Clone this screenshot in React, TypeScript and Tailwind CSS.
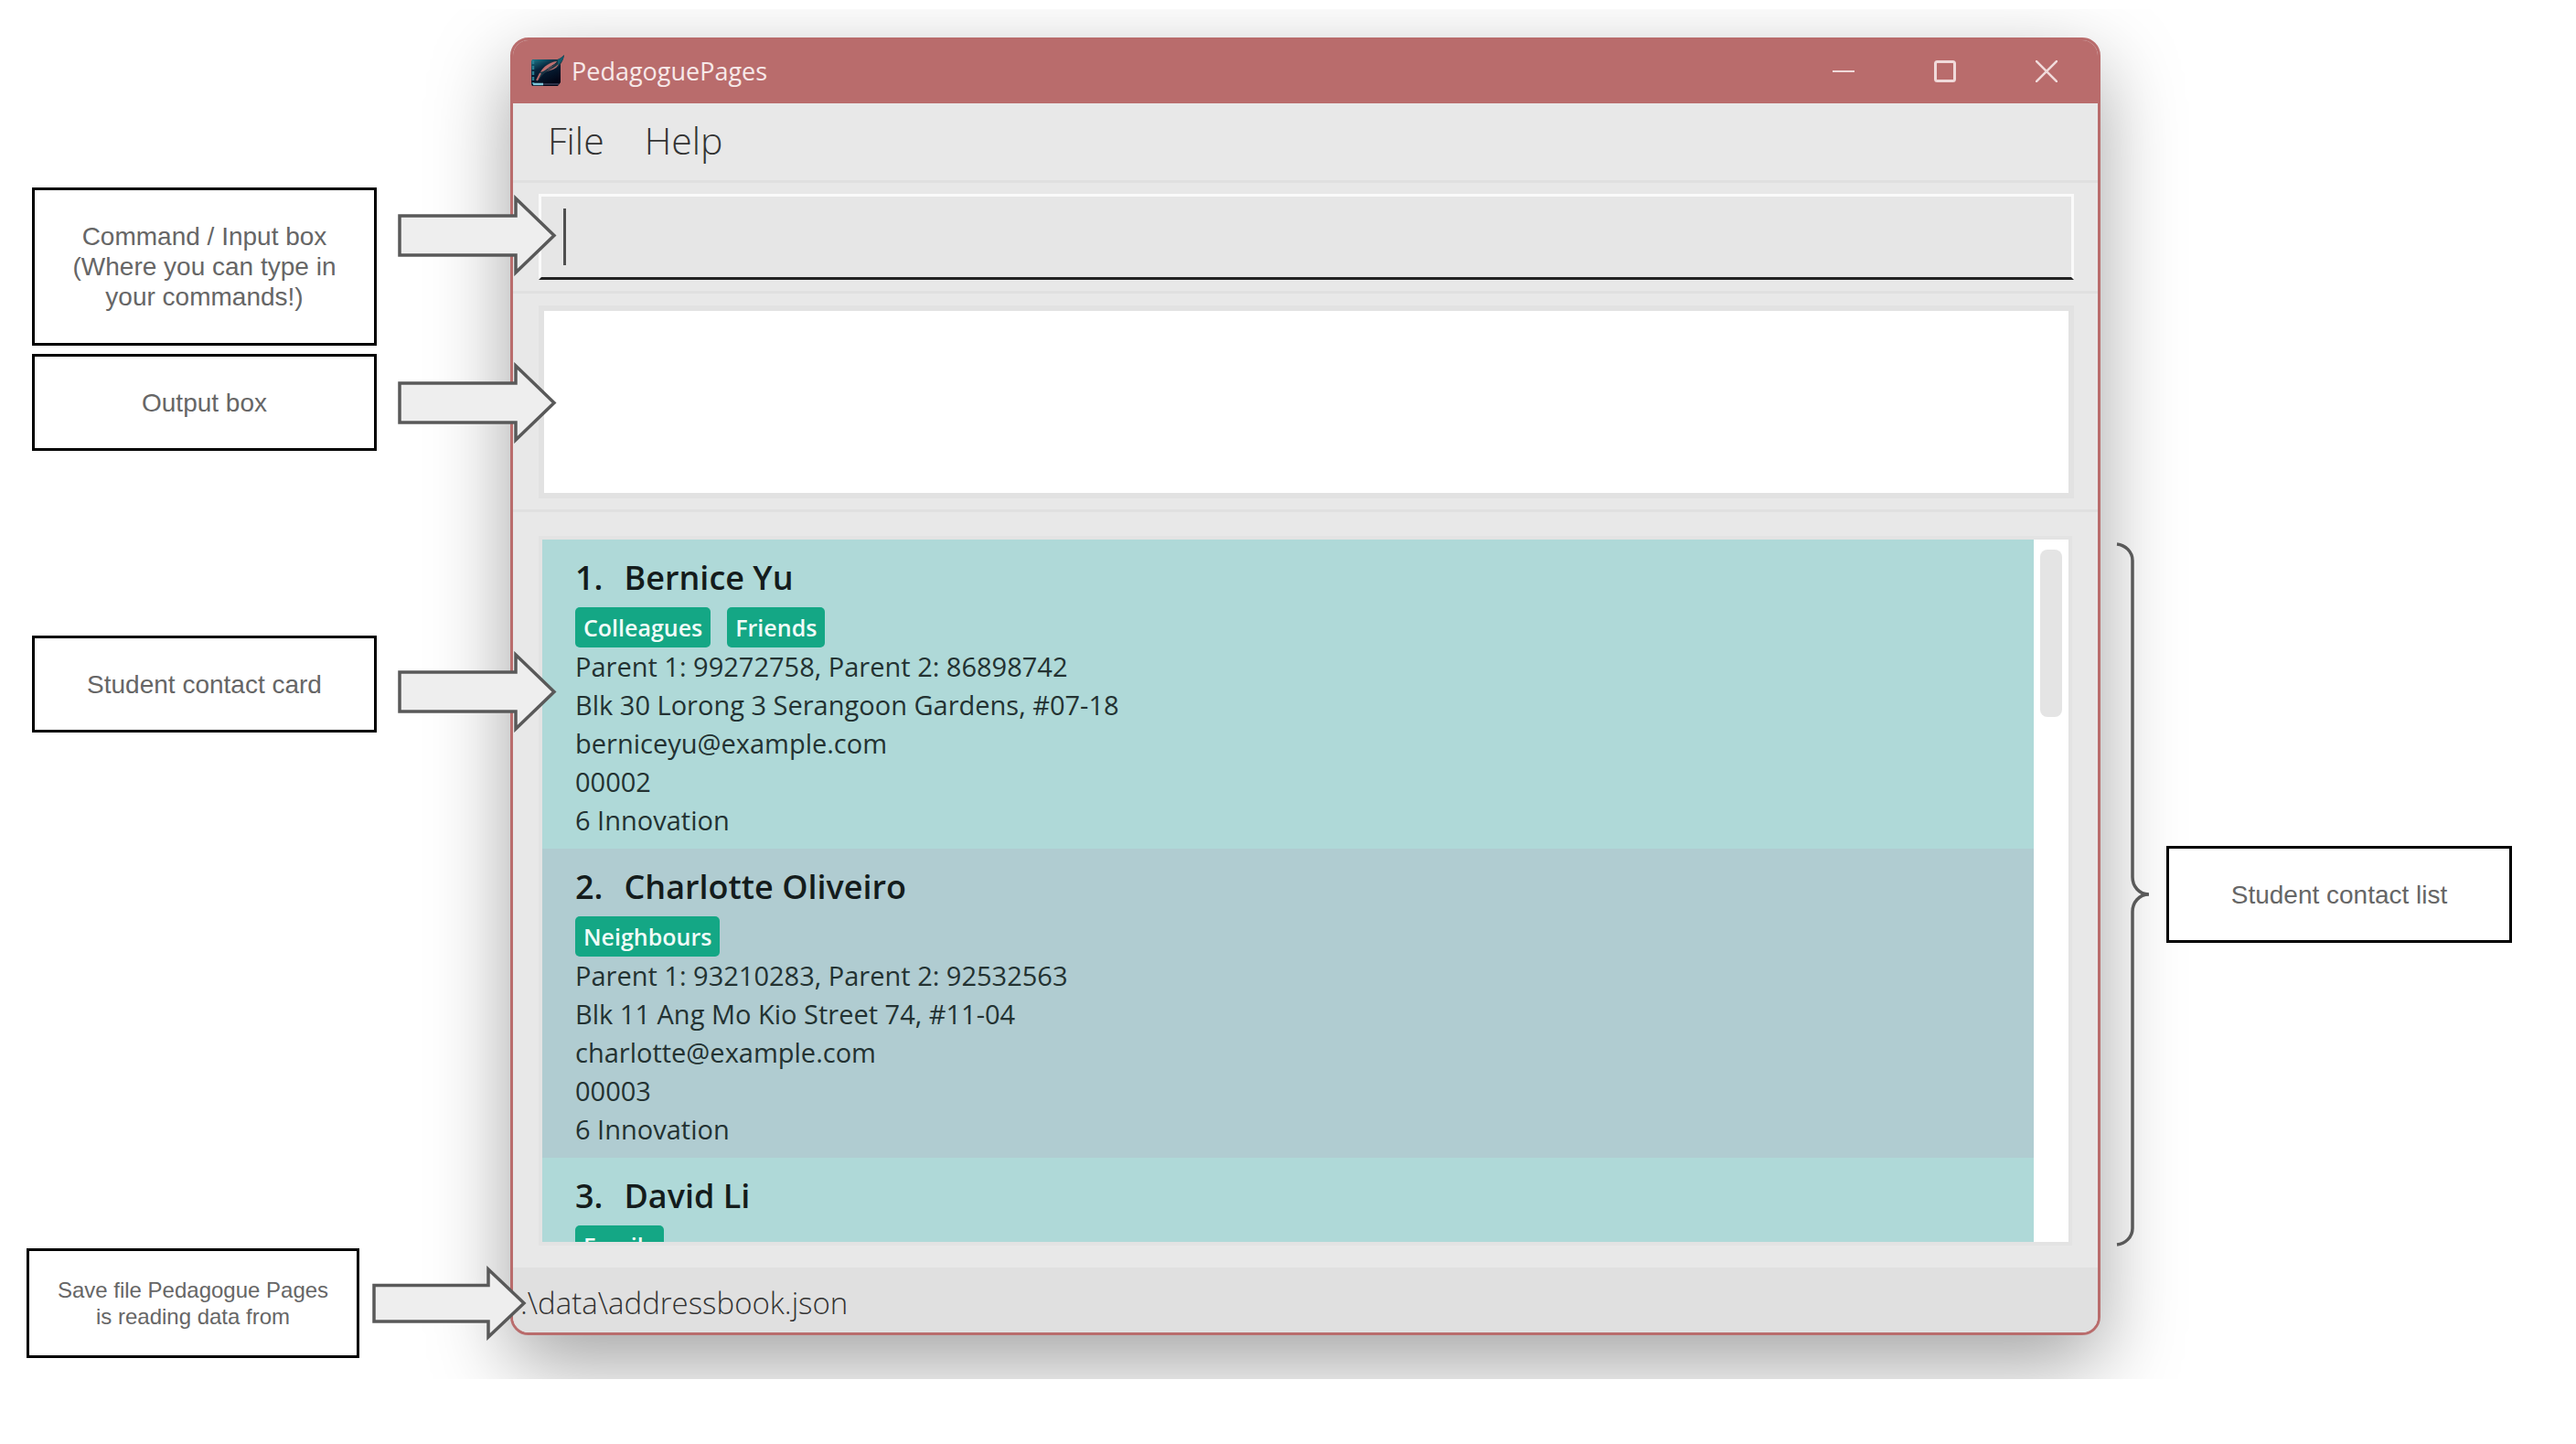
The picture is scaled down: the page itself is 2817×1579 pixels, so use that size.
import type { ReactNode } from "react";

type Contact = {
  id: number;
  name: string;
  tags: string[];
  details: string[];
};

const contacts: Contact[] = [
  {
    id: 1,
    name: "Bernice Yu",
    tags: ["Colleagues", "Friends"],
    details: [
      "Parent 1: 99272758, Parent 2: 86898742",
      "Blk 30 Lorong 3 Serangoon Gardens, #07-18",
      "berniceyu@example.com",
      "00002",
      "6 Innovation",
    ],
  },
  {
    id: 2,
    name: "Charlotte Oliveiro",
    tags: ["Neighbours"],
    details: [
      "Parent 1: 93210283, Parent 2: 92532563",
      "Blk 11 Ang Mo Kio Street 74, #11-04",
      "charlotte@example.com",
      "00003",
      "6 Innovation",
    ],
  },
  { id: 3, name: "David Li", tags: ["Family"], details: [] },
];

function Arrow({ className = "" }: { className?: string }) {
  return (
    <svg className={`ml-[23px] h-[89px] w-[176px] shrink-0 ${className}`} viewBox="0 0 176 89" aria-hidden="true">
      <path d="M2 23H129V4L171 44.500L129 85V66H2Z" fill="#eeeeee" stroke="#595959" strokeWidth="3.500" />
    </svg>
  );
}

function SmallArrow() {
  return (
    <svg className="ml-[14px] h-[82px] w-[170px] shrink-0" viewBox="0 0 170 82" aria-hidden="true">
      <path d="M2 21.500H127V4L166 41L127 78V61H2Z" fill="#eeeeee" stroke="#595959" strokeWidth="3.500" />
    </svg>
  );
}

function Brace() {
  return (
    <svg className="h-[770px] w-10 shrink-0" viewBox="0 0 40 770" fill="none" aria-hidden="true">
      <path
        d="M2 2C11 3 19 10 19 20V366C19 376 26 385 37 385C26 385 19 394 19 404V750C19 760 11 767 2 768"
        stroke="#595959"
        strokeWidth="3.500"
      />
    </svg>
  );
}

function Note({ className, children }: { className: string; children: ReactNode }) {
  return (
    <p
      className={`flex shrink-0 items-center justify-center border-[3px] border-black bg-white text-center font-['Liberation_Sans',sans-serif] text-[#666] ${className}`}
    >
      {children}
    </p>
  );
}

function AppIcon() {
  return (
    <svg className="h-9 w-[38px]" viewBox="0 0 38 36" aria-hidden="true">
      <defs>
        <linearGradient id="cover" x1="0" y1="0" x2="0.5" y2="1">
          <stop offset="0" stopColor="#1d7c8c" />
          <stop offset="0.4" stopColor="#07243c" />
          <stop offset="1" stopColor="#020616" />
        </linearGradient>
      </defs>
      <path d="M2 5H33V30L30 34H3Q1 34 1 31V7Z" fill="url(#cover)" />
      <path d="M3 6V32" stroke="#2b7d90" strokeWidth="2.500" strokeDasharray="4 2" />
      <path d="M3 32H14" stroke="#7fc4d8" strokeWidth="2.500" />
      <path d="M14 32H31" stroke="#3c4058" strokeWidth="1.500" />
      <path d="M37 0C36 8 31 15 22 17C17 18 13 21 9 28L8 27C10 16 19 8 27 6C31 5 34 3 37 0Z" fill="#1f3644" />
      <path d="M29 7C21 8 14 13 11 19C17 17 25 14 29 7Z" fill="#c07070" />
      <path d="M31 9C28 14 22 16 15 19C20 17 30 16 31 9Z" fill="#c07070" />
      <path d="M33 5C25 13 14 15 8 28" stroke="#0b3346" strokeWidth="1" fill="none" />
      <path d="M7 28L11 20" stroke="#b96c6c" strokeWidth="2" />
      <path d="M37 0C36 5 34 8 30 11L30 5C33 4 35 2 37 0Z" fill="#14596a" />
    </svg>
  );
}

function TitleBar() {
  return (
    <header className="flex h-[69px] items-center bg-[#b96c6c] pb-[2px] pl-[19px] text-[#f7e9e9]">
      <AppIcon />
      <h1 className="ml-[7px] flex-1 text-[27px] leading-9">PedagoguePages</h1>
      <button type="button" aria-label="Minimize" className="flex h-full w-28 items-center justify-center">
        <svg className="h-6 w-6" viewBox="0 0 24 24" stroke="#f0dada" strokeWidth="2" aria-hidden="true">
          <path d="M0 12H24" />
        </svg>
      </button>
      <button type="button" aria-label="Maximize" className="flex h-full w-[110px] items-center justify-center">
        <svg className="h-6 w-6" viewBox="0 0 24 24" fill="none" stroke="#f0dada" strokeWidth="3" aria-hidden="true">
          <rect x="1.500" y="1.500" width="21" height="21" rx="2" />
        </svg>
      </button>
      <button type="button" aria-label="Close" className="flex h-full w-28 items-center justify-center">
        <svg className="h-6 w-6" viewBox="0 0 24 24" fill="none" stroke="#f0dada" strokeWidth="2.500" aria-hidden="true">
          <path d="M0 0L24 24M24 0L0 24" />
        </svg>
      </button>
    </header>
  );
}

function ContactCard({ contact }: { contact: Contact }) {
  return (
    <li className="h-[338px] px-9 pt-4 odd:bg-[#afd9d8] even:bg-[#b0ccd1]">
      <h2 className="flex gap-[23px] text-[36px] leading-[52px] font-semibold text-[#141c1c]">
        <span>{contact.id}.</span>
        <span>{contact.name}</span>
      </h2>
      <ul className="mt-[6px] flex gap-[18px]">
        {contact.tags.map((tag) => (
          <li key={tag} className="rounded-[5px] bg-[#14a785] px-[9px] text-[25px] leading-[44px] font-semibold text-[#f0fbf8]">
            {tag}
          </li>
        ))}
      </ul>
      <div className="text-[29px] leading-[42px] text-[#233232]">
        {contact.details.map((line) => (
          <p key={line}>{line}</p>
        ))}
      </div>
    </li>
  );
}

function AppWindow() {
  return (
    <main className="overflow-hidden rounded-[20px] border-[3px] border-[#b96c6c] bg-[#e8e8e8] shadow-[0_32px_88px_rgba(0,0,0,0.36)]">
      <TitleBar />
      <nav className="flex h-[87px] items-center gap-11 border-b-[3px] border-[#e0e0e0] pb-[2px] pl-[38px] text-[41px] font-light text-[#333]">
        <button type="button">File</button>
        <button type="button">Help</button>
      </nav>
      <section className="border-b-[3px] border-[#e0e0e0] py-3 pr-[26px] pl-7">
        <div className="relative">
          <input
            type="text"
            aria-label="Command"
            className="block h-[94px] w-full border-[3px] border-[#fafafa] border-b-[#222] bg-[#e6e6e6] px-6 text-[30px] outline-none"
          />
          <span className="absolute top-4 left-[27px] h-[62px] w-[3px] bg-[#4f4f4f]" />
        </div>
      </section>
      <section className="border-b-[3px] border-[#e0e0e0] pt-[13px] pr-[26px] pb-3 pl-7">
        <output aria-label="Result" className="block h-[211px] border-[6px] border-[#e2e2e2] bg-white" />
      </section>
      <section className="px-7 pt-[26px] pb-6">
        <div className="flex h-[776px] overflow-hidden border-4 border-[#e3e3e3] bg-white">
          <ol className="min-w-0 flex-1 overflow-hidden">
            {contacts.map((contact) => (
              <ContactCard key={contact.id} contact={contact} />
            ))}
          </ol>
          <div className="w-[38px] pt-[11px] pl-[7px]">
            <div className="h-[183px] w-6 rounded-lg bg-[#e4e4e4]" />
          </div>
        </div>
      </section>
      <footer className="h-[71px] bg-[#e0e0e0] pl-2 text-[33px] leading-[78px] font-light text-[#333]">
        .\data\addressbook.json
      </footer>
    </main>
  );
}

export default function App() {
  return (
    <div className="flex min-h-screen items-start overflow-hidden bg-white font-['Open_Sans','Noto_Sans',sans-serif]">
      <aside className="relative z-10 flex w-[558px] shrink-0 flex-col pt-[205px] pl-[35px]">
        <div className="flex items-start">
          <Note className="h-[173px] w-[377px] px-8 text-[28px] leading-[33px]">
            Command / Input box (Where you can type in your commands!)
          </Note>
          <Arrow className="mt-2" />
        </div>
        <div className="mt-[9px] flex items-center">
          <Note className="h-[106px] w-[377px] text-[28px] leading-[33px]">Output box</Note>
          <Arrow />
        </div>
        <div className="mt-[202px] flex items-start">
          <Note className="h-[106px] w-[377px] text-[28px] leading-[33px]">Student contact card</Note>
          <Arrow className="mt-[17px]" />
        </div>
        <div className="mt-[564px] -ml-[6px] flex items-center">
          <Note className="h-[120px] w-[364px] px-6 text-[24px] leading-[29px]">
            Save file Pedagogue Pages is reading data from
          </Note>
          <SmallArrow />
        </div>
      </aside>

      <div className="mt-[10px] min-w-0 flex-1 overflow-x-visible overflow-y-clip pt-[31px] pb-12">
        <AppWindow />
      </div>

      <aside className="relative z-10 mt-[593px] flex w-[520px] shrink-0 items-center gap-4 pl-[16px]">
        <Brace />
        <Note className="h-[106px] w-[378px] text-[28px] leading-[33px]">Student contact list</Note>
      </aside>
    </div>
  );
}
